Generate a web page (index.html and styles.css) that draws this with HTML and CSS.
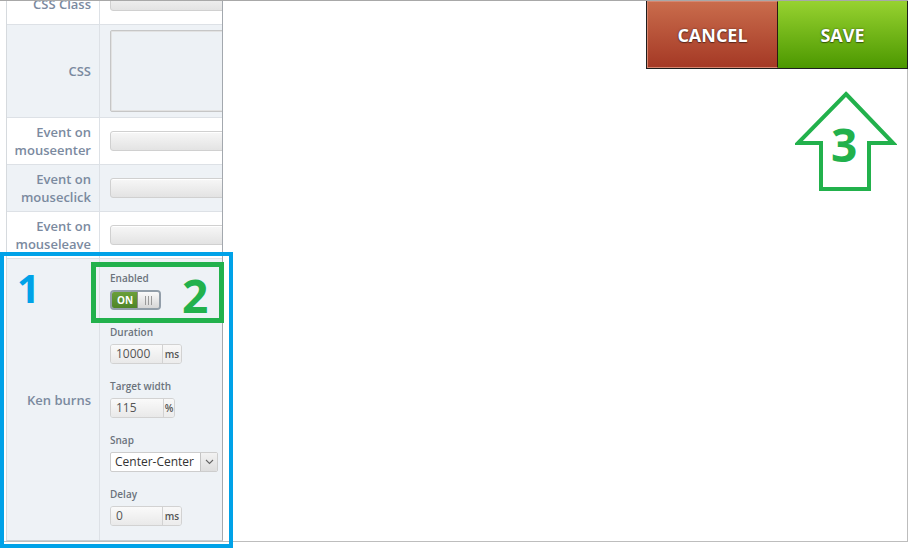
FILE: index.html
```html
<!DOCTYPE html>
<html>
<head>
<meta charset="utf-8">
<link rel="stylesheet" href="styles.css">
</head>
<body>
<div class="page">
  <div class="frame">
    <div class="panel">
      <div class="rows">
        <div class="row row-white h46">
          <div class="label label-low">CSS Class</div>
          <div class="field"><div class="txt"></div></div>
        </div>
        <div class="row row-blue h92">
          <div class="label">CSS</div>
          <div class="field field-top"><div class="area"></div></div>
        </div>
        <div class="row row-white h46">
          <div class="label">Event on<br>mouseenter</div>
          <div class="field"><div class="txt"></div></div>
        </div>
        <div class="row row-blue h46">
          <div class="label">Event on<br>mouseclick</div>
          <div class="field"><div class="txt"></div></div>
        </div>
        <div class="row row-white h46">
          <div class="label">Event on<br>mouseleave</div>
          <div class="field"><div class="txt"></div></div>
        </div>
        <div class="row row-blue kb">
          <div class="label">Ken burns</div>
          <div class="field field-top kb-fields">
            <div class="group">
              <div class="small">Enabled</div>
              <div class="toggle"><span class="on">ON</span><span class="knob"><i></i><i></i><i></i></span></div>
            </div>
            <div class="group">
              <div class="small">Duration</div>
              <div class="combo"><span class="val w52">10000</span><span class="unit w20">ms</span></div>
            </div>
            <div class="group">
              <div class="small">Target width</div>
              <div class="combo"><span class="val w53">115</span><span class="unit w12">%</span></div>
            </div>
            <div class="group">
              <div class="small">Snap</div>
              <div class="select"><span class="sel-val">Center-Center</span><span class="sel-btn"><svg width="9" height="6" viewBox="0 0 9 6"><path d="M1 1 L4.5 4.5 L8 1" fill="none" stroke="#666" stroke-width="1.1"/></svg></span></div>
            </div>
            <div class="group">
              <div class="small">Delay</div>
              <div class="combo"><span class="val w52">0</span><span class="unit w20">ms</span></div>
            </div>
          </div>
        </div>
      </div>
    </div>
    <div class="buttons">
      <div class="btn cancel">CANCEL</div>
      <div class="btn save">SAVE</div>
    </div>
  </div>

  <div class="anno box-blue"></div>
  <div class="anno num num-1">1</div>
  <div class="anno box-green"></div>
  <div class="anno num num-2">2</div>
  <svg class="anno arrow" width="102" height="104" viewBox="0 0 102 104">
    <polygon points="51,4 98,53 74,53 74,99 26,99 26,53 3,53" fill="none" stroke="#22b14c" stroke-width="4"/>
  </svg>
  <div class="anno num num-3">3</div>
</div>
</body>
</html>
```

FILE: styles.css
```css
* { box-sizing: border-box; }
html, body { margin: 0; padding: 0; background: #fff; }
body { font-family: "Open Sans", "Liberation Sans", sans-serif; }

.page { position: relative; width: 916px; height: 548px; overflow: hidden; }

.frame {
  width: 908px;
  height: 542px;
  border-top: 1px solid #a8a8a8;
  border-right: 1px solid #bdbdbd;
  border-bottom: 1px solid #bdbdbd;
  display: flex;
  align-items: flex-start;
  padding-left: 6px;
}

.panel {
  width: 217px;
  height: 540px;
  border-left: 1px solid #d6dade;
  border-right: 1px solid #a3a8ae;
  border-bottom: 1px solid #c9cdd2;
  overflow: hidden;
  flex: none;
}
.rows { margin-top: -23px; }

.row { display: flex; border-bottom: 1px solid #dde1e6; }
.row-white { background: #fff; }
.row-blue { background: #eef2f6; }
.h46 { height: 47px; }
.h92 { height: 93px; }
.kb { height: 282px; border-bottom: none; }

.label {
  width: 93px;
  flex: none;
  border-right: 1px solid #dde1e6;
  display: flex;
  align-items: center;
  justify-content: flex-end;
  text-align: right;
  padding-right: 8px;
  font-size: 13px;
  font-weight: 600;
  line-height: 18px;
  color: #7b8a9f;
}
.label-low { padding-top: 5px; }

.field {
  flex: 1;
  display: flex;
  align-items: center;
  padding-left: 10px;
  min-width: 0;
  overflow: hidden;
}
.field-top { align-items: flex-start; padding-top: 5px; }

.txt {
  flex: none;
  width: 200px;
  height: 20px;
  margin-top: -1px;
  border: 1px solid #d0d0d0;
  border-radius: 3px;
  background: linear-gradient(#f7f7f7, #e3e3e3);
  box-shadow: inset 0 1px 0 #fff;
}

.area {
  flex: none;
  width: 200px;
  height: 82px;
  border: 1px solid #c6c6c6;
  border-radius: 2px;
  background: #edf1f5;
  box-shadow: inset 0 0 0 1px #e2e2e2;
}

.kb-fields { flex-direction: column; padding-top: 12px; }
.group { height: 54px; }
.small {
  font-size: 10px;
  font-weight: 600;
  line-height: 14px;
  height: 14px;
  color: #6b737c;
  margin-bottom: 5px;
}

.toggle {
  width: 51px;
  height: 20px;
  border: 2px solid #929ea9;
  border-radius: 4px;
  display: flex;
  overflow: hidden;
  background: #ddd;
}
.toggle .on {
  width: 25px;
  background: linear-gradient(#6a9f3a, #4f8527);
  color: #fff;
  font-size: 10px;
  font-weight: 700;
  line-height: 16px;
  text-align: center;
  padding-left: 1px;
}
.toggle .knob {
  flex: 1;
  background: linear-gradient(#fafafa, #d6d6d6);
  border-left: 1px solid #8c8c8c;
  display: flex;
  align-items: center;
  justify-content: center;
  gap: 2px;
}
.toggle .knob i {
  display: block;
  width: 1px;
  height: 9px;
  background: #9a9a9a;
}

.combo {
  display: flex;
  height: 20px;
  border: 1px solid #d2d2d2;
  border-radius: 3px;
  overflow: hidden;
  width: max-content;
}
.val {
  background: linear-gradient(#fafafa, #e9e9e9);
  font-size: 12px;
  line-height: 18px;
  color: #555;
  padding-left: 5px;
}
.unit {
  border-left: 1px solid #d2d2d2;
  background: linear-gradient(#f8f8f8, #ececec);
  font-size: 10px;
  font-weight: 600;
  line-height: 18px;
  color: #555;
  text-align: center;
}
.w52 { width: 51px; }
.w53 { width: 52px; }
.w20 { width: 19px; }
.w12 { width: 11px; }

.select {
  display: flex;
  width: 108px;
  height: 20px;
  border: 1px solid #cdcdcd;
  border-radius: 2px;
  background: #fff;
  overflow: hidden;
}
.sel-val {
  flex: 1;
  font-size: 12px;
  line-height: 18px;
  color: #333;
  padding-left: 4px;
  white-space: nowrap;
}
.sel-btn {
  width: 17px;
  border-left: 1px solid #c4c4c4;
  background: linear-gradient(#f2f2f2, #dedede);
  display: flex;
  align-items: center;
  justify-content: center;
}

.buttons {
  margin-left: auto;
  margin-right: -1px;
  display: flex;
  border-left: 1px solid #1e1e1e;
  border-bottom: 1px solid #1e1e1e;
  border-right: 1px solid #1e1e1e;
  height: 68px;
  flex: none;
}
.btn {
  height: 67px;
  display: flex;
  align-items: center;
  justify-content: center;
  color: #fff;
  font-size: 18px;
  font-weight: 700;
  text-shadow: 0 0 2px rgba(0,0,0,0.55), 0 1px 1px rgba(0,0,0,0.4);
}
.cancel {
  width: 131px;
  background: linear-gradient(#c96c4c, #a53925);
  border: 1px solid #d68670;
  border-right: 1px solid #2a1a14;
}
.save {
  width: 129px;
  background: linear-gradient(#97d230, #4c9800);
}

.anno { position: absolute; }
.box-blue {
  left: 0; top: 252px;
  width: 233px; height: 296px;
  border: 4px solid #00a2e8;
}
.box-green {
  left: 91px; top: 262px;
  width: 133px; height: 61px;
  border: 5px solid #22b14c;
}
.arrow { left: 795px; top: 90px; }
.num {
  font-family: "Open Sans", "Liberation Sans", sans-serif;
  font-weight: 700;
  line-height: 1;
}
.num-1 { left: 17px; top: 268px; font-size: 40px; color: #00a2e8; }
.num-2 { left: 182px; top: 272px; font-size: 46px; color: #22b14c; }
.num-3 { left: 831px; top: 121px; font-size: 46px; color: #22b14c; }
```
